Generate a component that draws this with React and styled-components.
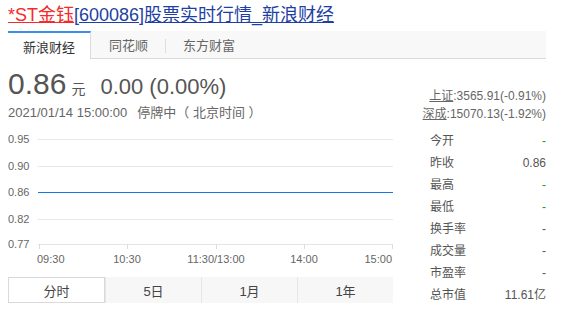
import React from "react";
import styled, { createGlobalStyle } from "styled-components";

const GlobalStyle = createGlobalStyle`
  body {
    margin: 0;
    background: #fff;
    font-family: "Liberation Sans", "Noto Sans CJK SC", sans-serif;
    color: #333;
  }
`;

const Page = styled.div`
  width: 538px;
  padding: 1px 8px 0;
`;

const Title = styled.h1`
  margin: 0;
  height: 28px;
  line-height: 28px;
  font-size: 18px;
  font-weight: normal;
  white-space: nowrap;
  a {
    text-decoration: underline;
  }
`;

const TitleLink = styled.a`
  color: ${(p) => (p.$red ? "#f52a2a" : "#1e3fa3")};
`;

const TabBar = styled.div`
  display: flex;
  height: 27px;
  margin-top: 2px;
  background: #f8f8f8;
  border-bottom: 1px solid #d9d9d9;
`;

const Tab = styled.div`
  box-sizing: border-box;
  width: ${(p) => p.$w}px;
  height: ${(p) => (p.$active ? 28 : 27)}px;
  display: flex;
  align-items: center;
  justify-content: center;
  font-size: 13px;
  color: ${(p) => (p.$active ? "#333" : "#666")};
  background: ${(p) => (p.$active ? "#fff" : "transparent")};
  border-top: ${(p) => (p.$active ? "2px solid #3a8ee6" : "none")};
  border-right: ${(p) => (p.$active ? "1px solid #dcdcdc" : "none")};
  position: relative;
  &::after {
    content: "";
    display: ${(p) => (p.$sep ? "block" : "none")};
    position: absolute;
    right: 0;
    top: 8px;
    width: 1px;
    height: 14px;
    background: #ddd;
  }
`;

const Main = styled.div`
  display: flex;
`;

const Left = styled.div`
  width: 385px;
`;

const Right = styled.div`
  flex: 1;
  padding-top: 28px;
`;

const PriceRow = styled.div`
  display: flex;
  align-items: baseline;
  margin-top: 8px;
  color: #555;
  line-height: 34px;
  height: 34px;
`;

const Price = styled.span`
  font-size: 30px;
`;

const Unit = styled.span`
  font-size: 14px;
  margin: 0 15px 0 5px;
`;

const Change = styled.span`
  font-size: 22px;
`;

const DateLine = styled.div`
  margin-top: 3px;
  font-size: 13px;
  line-height: 18px;
  color: #666;
  white-space: pre;
  span {
    margin-left: 10px;
  }
`;

const Chart = styled.svg`
  display: block;
  margin-top: 4px;
  font-family: "Liberation Sans", sans-serif;
`;

const PeriodTabs = styled.div`
  display: flex;
  margin-top: 6px;
  height: 26px;
  background: #f7f7f7;
`;

const Period = styled.div`
  box-sizing: border-box;
  flex: 1;
  display: flex;
  align-items: center;
  justify-content: center;
  font-size: 13px;
  color: #444;
  background: ${(p) => (p.$active ? "#fff" : "transparent")};
  border: ${(p) => (p.$active ? "1px solid #d9d9d9" : "none")};
  border-left: ${(p) => (p.$first || p.$active ? "" : "1px solid #e6e6e6")};
`;

const IndexLine = styled.div`
  text-align: right;
  font-size: 12px;
  line-height: 18px;
  color: #666;
  white-space: nowrap;
  a {
    color: #666;
    text-decoration: underline;
  }
`;

const Stats = styled.div`
  margin-top: 7px;
  padding-left: 37px;
`;

const StatRow = styled.div`
  display: flex;
  justify-content: space-between;
  height: 22px;
  line-height: 22px;
  font-size: 12px;
  color: #555;
`;

const StatValue = styled.span`
  color: ${(p) => (p.$green ? "#1a9a1a" : "#555")};
`;

const yTicks = [
  { label: "0.95", y: 13 },
  { label: "0.90", y: 40 },
  { label: "0.86", y: 66 },
  { label: "0.82", y: 93 },
];

const xTicks = [
  { label: "09:30", x: 31, anchor: "start", lx: 29 },
  { label: "10:30", x: 119, anchor: "middle" },
  { label: "11:30/13:00", x: 208, anchor: "middle" },
  { label: "14:00", x: 296, anchor: "middle" },
  { label: "15:00", x: 384, anchor: "end", lx: 384 },
];

const stats = [
  ["今开", "-", true],
  ["昨收", "0.86"],
  ["最高", "-", true],
  ["最低", "-", true],
  ["换手率", "-"],
  ["成交量", "-"],
  ["市盈率", "-"],
  ["总市值", "11.61亿"],
];

function MinuteChart() {
  return (
    <Chart width="385" height="145">
      {yTicks.map((t) => (
        <g key={t.label}>
          <line
            x1="30"
            x2="385"
            y1={t.y + 0.5}
            y2={t.y + 0.5}
            stroke={t.label === "0.86" ? "#1677e6" : "#e8e8e8"}
          />
          <text x="0" y={t.y + 4} fontSize="11" fill="#666">
            {t.label}
          </text>
        </g>
      ))}
      <line x1="30" x2="385" y1="118.5" y2="118.5" stroke="#e4e4e4" />
      <text x="0" y="122" fontSize="11" fill="#666">
        0.77
      </text>
      {xTicks.map((t) => (
        <g key={t.label}>
          <line x1={t.x + 0.5} x2={t.x + 0.5} y1="118" y2="123" stroke="#ddd" />
          <text
            x={t.lx ?? t.x}
            y="137"
            fontSize="11"
            fill="#666"
            textAnchor={t.anchor}
          >
            {t.label}
          </text>
        </g>
      ))}
    </Chart>
  );
}

export default function App() {
  return (
    <>
      <GlobalStyle />
      <Page>
        <Title>
          <TitleLink $red>*ST金钰</TitleLink>
          <TitleLink>[600086]股票实时行情_新浪财经</TitleLink>
        </Title>
        <TabBar>
          <Tab $w={83} $active>
            新浪财经
          </Tab>
          <Tab $w={75} $sep>
            同花顺
          </Tab>
          <Tab $w={86}>东方财富</Tab>
        </TabBar>
        <Main>
          <Left>
            <PriceRow>
              <Price>0.86</Price>
              <Unit>元</Unit>
              <Change>0.00 (0.00%)</Change>
            </PriceRow>
            <DateLine>
              2021/01/14 15:00:00<span>停牌中（ 北京时间 ）</span>
            </DateLine>
            <MinuteChart />
            <PeriodTabs>
              <Period $active $first>
                分时
              </Period>
              <Period>5日</Period>
              <Period>1月</Period>
              <Period>1年</Period>
            </PeriodTabs>
          </Left>
          <Right>
            <IndexLine>
              <a>上证</a>:3565.91(-0.91%)
            </IndexLine>
            <IndexLine>
              <a>深成</a>:15070.13(-1.92%)
            </IndexLine>
            <Stats>
              {stats.map(([label, value, green]) => (
                <StatRow key={label}>
                  <span>{label}</span>
                  <StatValue $green={green}>{value}</StatValue>
                </StatRow>
              ))}
            </Stats>
          </Right>
        </Main>
      </Page>
    </>
  );
}
